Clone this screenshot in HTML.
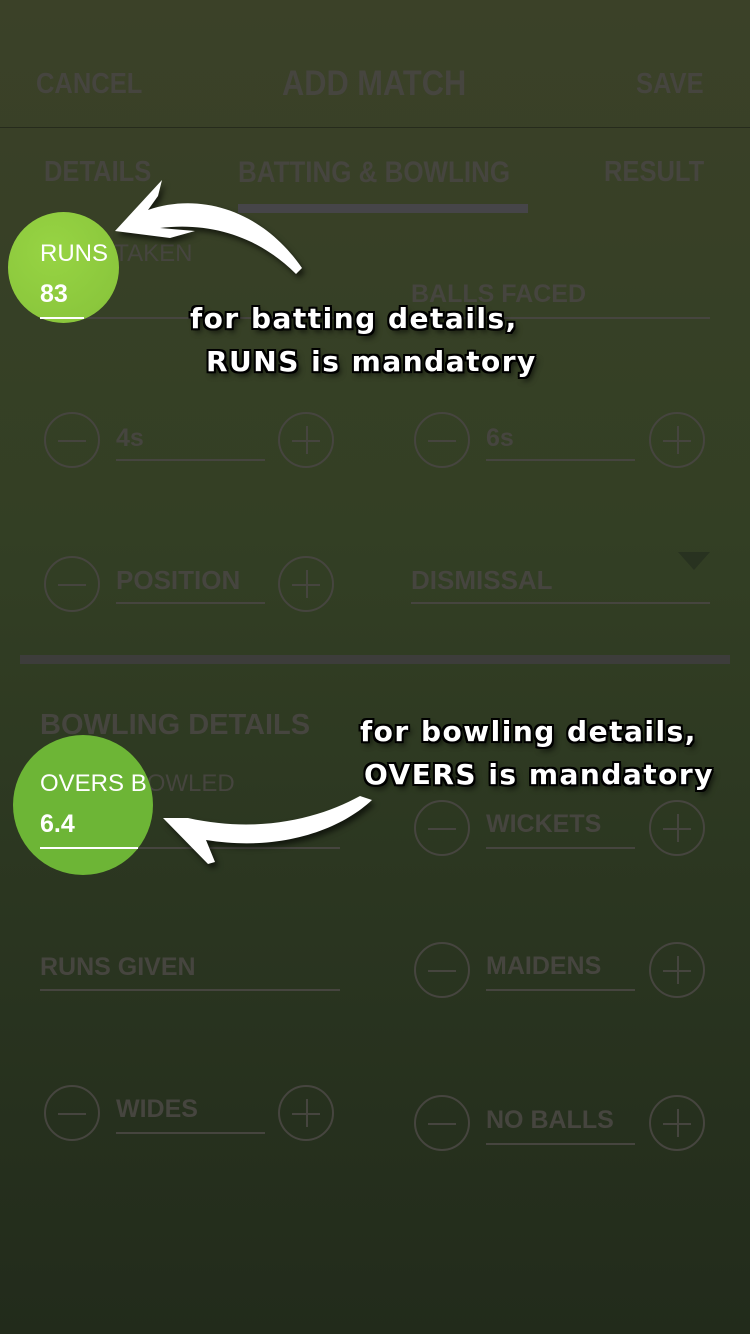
<!DOCTYPE html>
<html><head><meta charset="utf-8"><style>
*{margin:0;padding:0;box-sizing:border-box}
body{width:750px;height:1334px;overflow:hidden;position:relative;background:linear-gradient(#3b4128 0%,#333f24 40%,#2a3520 70%,#222b1b 100%);font-family:"Liberation Sans",sans-serif}
.t{position:absolute;color:#46453f;font-weight:bold;white-space:nowrap}
.n{transform:scaleX(.88);transform-origin:0 0}
.l{position:absolute;height:2px;background:#46453f}
.c{position:absolute;width:56px;height:56px;border:2px solid #46453f;border-radius:50%}
.c:before{content:"";position:absolute;left:12px;right:12px;top:26px;height:2px;background:#46453f}
.p:after{content:"";position:absolute;top:12px;bottom:12px;left:26px;width:2px;background:#46453f}
.h{position:absolute;color:#fff;font-family:"DejaVu Sans",sans-serif;font-weight:bold;font-size:28px;white-space:nowrap;letter-spacing:1.5px;text-shadow:-2px 0 #000,2px 0 #000,0 -2px #000,0 2px #000,-2px -2px #000,2px 2px #000,-2px 2px #000,2px -2px #000,3px 4px 6px rgba(0,0,0,.7)}
.w{position:absolute;color:#fff;white-space:nowrap}
</style></head><body>
<div class="t n" style="left:36px;top:68px;font-size:29px">CANCEL</div>
<div class="t n" style="left:282px;top:64px;font-size:35px">ADD MATCH</div>
<div class="t n" style="left:636px;top:68px;font-size:29px">SAVE</div>
<div style="position:absolute;left:0;right:0;top:127px;height:1px;background:#262b1c"></div>
<div class="t n" style="left:44px;top:156px;font-size:29px">DETAILS</div>
<div class="t n" style="left:238px;top:156px;font-size:29.5px">BATTING &amp; BOWLING</div>
<div class="t n" style="left:604px;top:156px;font-size:29px">RESULT</div>
<div style="position:absolute;left:238px;top:204px;width:290px;height:9px;background:#464549"></div>

<div class="t" style="left:40px;top:240px;font-size:24px;font-weight:normal">RUNS TAKEN</div>
<div class="l" style="left:40px;top:317px;width:300px"></div>
<div class="t" style="left:411px;top:280px;font-size:25px">BALLS FACED</div>
<div class="l" style="left:411px;top:317px;width:299px"></div>

<div class="c" style="left:44px;top:412px"></div><div class="t" style="left:116px;top:424px;font-size:25px">4s</div><div class="l" style="left:116px;top:459px;width:149px"></div><div class="c p" style="left:278px;top:412px"></div>
<div class="c" style="left:414px;top:412px"></div><div class="t" style="left:486px;top:424px;font-size:25px">6s</div><div class="l" style="left:486px;top:459px;width:149px"></div><div class="c p" style="left:649px;top:412px"></div>

<div class="c" style="left:44px;top:556px"></div><div class="t" style="left:116px;top:565px;font-size:26px">POSITION</div><div class="l" style="left:116px;top:602px;width:149px"></div><div class="c p" style="left:278px;top:556px"></div>
<div class="t" style="left:411px;top:565px;font-size:26px">DISMISSAL</div><div class="l" style="left:411px;top:602px;width:299px"></div>
<div style="position:absolute;left:678px;top:552px;border-left:16px solid transparent;border-right:16px solid transparent;border-top:18px solid #283220"></div>

<div style="position:absolute;left:20px;top:655px;width:710px;height:9px;background:#3d3d3b"></div>
<div class="t" style="left:40px;top:709px;font-size:29px">BOWLING DETAILS</div>

<div class="t" style="left:40px;top:770px;font-size:24px;font-weight:normal">OVERS BOWLED</div>
<div class="l" style="left:40px;top:847px;width:300px"></div>
<div class="c" style="left:414px;top:800px"></div><div class="t" style="left:486px;top:810px;font-size:25px">WICKETS</div><div class="l" style="left:486px;top:847px;width:149px"></div><div class="c p" style="left:649px;top:800px"></div>

<div class="t" style="left:40px;top:953px;font-size:25px">RUNS GIVEN</div><div class="l" style="left:40px;top:989px;width:300px"></div>
<div class="c" style="left:414px;top:942px"></div><div class="t" style="left:486px;top:952px;font-size:25px">MAIDENS</div><div class="l" style="left:486px;top:989px;width:149px"></div><div class="c p" style="left:649px;top:942px"></div>

<div class="c" style="left:44px;top:1085px"></div><div class="t" style="left:116px;top:1095px;font-size:25px">WIDES</div><div class="l" style="left:116px;top:1132px;width:149px"></div><div class="c p" style="left:278px;top:1085px"></div>
<div class="c" style="left:414px;top:1095px"></div><div class="t" style="left:486px;top:1106px;font-size:25px">NO BALLS</div><div class="l" style="left:486px;top:1143px;width:149px"></div><div class="c p" style="left:649px;top:1095px"></div>

<div style="position:absolute;left:8px;top:212px;width:111px;height:111px;border-radius:50%;background:radial-gradient(circle at 40% 35%,#97d443,#86c23a)"></div>
<div class="w" style="left:40px;top:240px;font-size:24px">RUNS</div>
<div class="w" style="left:40px;top:280px;font-size:25px;font-weight:bold">83</div>
<div style="position:absolute;left:40px;top:317px;width:44px;height:2px;background:#fff"></div>

<div style="position:absolute;left:13px;top:735px;width:140px;height:140px;border-radius:50%;background:#6db536"></div>
<div class="w" style="left:40px;top:770px;font-size:24px">OVERS B</div>
<div class="w" style="left:40px;top:810px;font-size:25px;font-weight:bold">6.4</div>
<div style="position:absolute;left:40px;top:847px;width:98px;height:2px;background:#fff"></div>

<svg style="position:absolute;left:0;top:0" width="750" height="1334">
<g fill="#fff" style="filter:drop-shadow(3px 4px 3px rgba(0,0,0,.6))">
<path d="M115 231 L150 193 L162 180 L158 196 L148 210 C200 192 262 210 302 268 L296 274 C258 236 210 222 160 228 L195 231 L170 238 Z"/>
<path d="M163 818 L188 818 C260 834 320 818 360 796 L372 800 C340 830 280 852 206 840 L215 862 L208 864 Z"/>
</g>
</svg>

<div class="h" style="left:190px;top:302px">for batting details,</div>
<div class="h" style="left:206px;top:345px">RUNS is mandatory</div>
<div class="h" style="left:360px;top:715px">for bowling details,</div>
<div class="h" style="left:364px;top:758px">OVERS is mandatory</div>
</body></html>
